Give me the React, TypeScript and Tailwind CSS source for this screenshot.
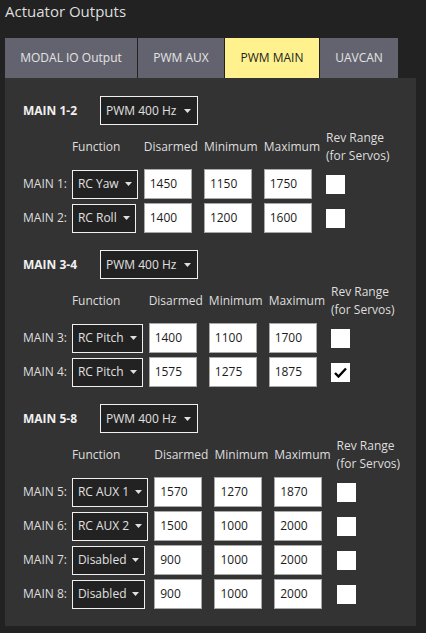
import React from "react";

type Row = {
    name: string,
    fn: string,
    disarmed: string,
    min: string,
    max: string,
    rev: boolean
}

type Group = {
    title: string,
    rate: string,
    rows: Row[]
}

const groups: Group[] = [
    {
        title: "MAIN 1-2",
        rate: "PWM 400 Hz",
        rows: [
            { name: "MAIN 1:", fn: "RC Yaw", disarmed: "1450", min: "1150", max: "1750", rev: false },
            { name: "MAIN 2:", fn: "RC Roll", disarmed: "1400", min: "1200", max: "1600", rev: false },
        ]
    },
    {
        title: "MAIN 3-4",
        rate: "PWM 400 Hz",
        rows: [
            { name: "MAIN 3:", fn: "RC Pitch", disarmed: "1400", min: "1100", max: "1700", rev: false },
            { name: "MAIN 4:", fn: "RC Pitch", disarmed: "1575", min: "1275", max: "1875", rev: true },
        ]
    },
    {
        title: "MAIN 5-8",
        rate: "PWM 400 Hz",
        rows: [
            { name: "MAIN 5:", fn: "RC AUX 1", disarmed: "1570", min: "1270", max: "1870", rev: false },
            { name: "MAIN 6:", fn: "RC AUX 2", disarmed: "1500", min: "1000", max: "2000", rev: false },
            { name: "MAIN 7:", fn: "Disabled", disarmed: "900", min: "1000", max: "2000", rev: false },
            { name: "MAIN 8:", fn: "Disabled", disarmed: "900", min: "1000", max: "2000", rev: false },
        ]
    },
];

const tabs = [
    { label: "MODAL IO Output", w: "w-[132px]" },
    { label: "PWM AUX", w: "w-[86px]" },
    { label: "PWM MAIN", w: "w-[94px]", active: true },
    { label: "UAVCAN", w: "w-[78px]" },
];

function Caret() {
    return (
        <svg width="7" height="4" viewBox="0 0 7 4" className="shrink-0">
            <path d="M0 0 L7 0 L3.5 4 Z" fill="#e0e0e0" />
        </svg>
    )
}

function Dropdown(props: { value: string, wide?: boolean }) {
    return (
        <div className={`h-[29px] inline-flex items-center pl-[5px] bg-[#222222] border border-[#f0f0f0] text-[#e0e0e0] whitespace-nowrap ${props.wide ? "gap-[8px] pr-[6px]" : "gap-[6px] pr-[5px]"}`}>
            <span>{props.value}</span>
            <Caret />
        </div>
    )
}

function NumBox(props: { value: string }) {
    return (
        <div className="h-[30px] w-[48px] flex items-center pl-[5px] bg-white border border-[#a8a8a8] text-[#1c1c1c]">
            {props.value}
        </div>
    )
}

function Check(props: { on: boolean }) {
    return (
        <div className="w-[19px] h-[19px] bg-white flex items-center justify-center">
            {props.on && (
                <svg width="13" height="11" viewBox="0 0 13 11">
                    <path d="M1 6 L4.5 9.5 L12 1.5" stroke="#000" strokeWidth="2.4" fill="none" strokeLinejoin="miter" />
                </svg>
            )}
        </div>
    )
}

function Section(props: { group: Group, last: boolean }) {
    const g = props.group;
    return (
        <div className={props.last ? "" : "mb-[15px]"}>
            <div className="flex items-center">
                <div className="w-[77px] font-bold text-[#f0f0f0]">{g.title}</div>
                <Dropdown value={g.rate} wide />
            </div>
            <table className="mt-[4px] border-collapse whitespace-nowrap">
                <thead>
                    <tr>
                        <th className="pb-[2px]"></th>
                        <th className="pb-[2px] pr-[6px] text-left font-normal align-middle">Function</th>
                        <th className="pb-[2px] pr-[6px] text-left font-normal align-middle">Disarmed</th>
                        <th className="pb-[2px] pr-[6px] text-left font-normal align-middle">Minimum</th>
                        <th className="pb-[2px] pr-[6px] text-left font-normal align-middle">Maximum</th>
                        <th className="pb-[2px] text-left font-normal align-middle leading-[18px]">Rev Range<br />(for Servos)</th>
                    </tr>
                </thead>
                <tbody>
                    {g.rows.map((r) => (
                        <tr key={r.name}>
                            <td className="py-[2px] pr-[5px]">{r.name}</td>
                            <td className="py-[2px] pr-[6px]"><Dropdown value={r.fn} /></td>
                            <td className="py-[2px] pr-[6px]"><NumBox value={r.disarmed} /></td>
                            <td className="py-[2px] pr-[6px]"><NumBox value={r.min} /></td>
                            <td className="py-[2px] pr-[6px]"><NumBox value={r.max} /></td>
                            <td className="py-[2px]"><Check on={r.rev} /></td>
                        </tr>
                    ))}
                </tbody>
            </table>
        </div>
    )
}

export default function App() {
    return (
        <div className="min-h-screen bg-[#222222] text-[#dedede] text-[12px] px-[5px] pb-[7px]" style={{ fontFamily: '"Open Sans", "Noto Sans", sans-serif' }}>
            <div className="h-[38px] pt-[1px] text-[15px] leading-[20px]">Actuator Outputs</div>
            <div className="flex gap-px h-[40px]">
                {tabs.map((t) => (
                    <div key={t.label} className={`${t.w} flex items-center justify-center ${t.active ? "bg-[#fff28e] text-[#1e1e1e]" : "bg-[#63636f] text-[#e4e4e4]"}`}>
                        {t.label}
                    </div>
                ))}
            </div>
            <div className="w-[411px] bg-[#333333] pt-[18px] pb-[15px] pl-[18px]">
                {groups.map((g, i) => (
                    <Section key={g.title} group={g} last={i === groups.length - 1} />
                ))}
            </div>
        </div>
    )
}
